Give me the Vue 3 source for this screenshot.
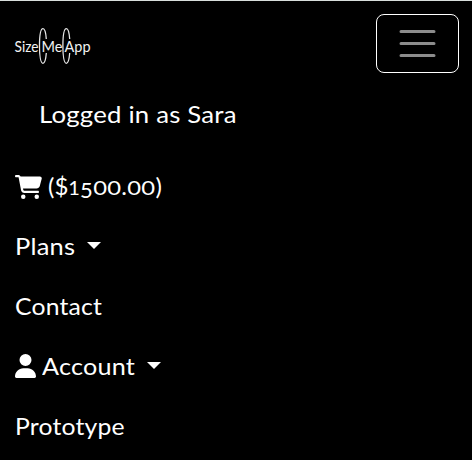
<script setup>
const links = [
  { label: 'Plans', cls: 'plans', caret: true },
  { label: 'Contact', cls: 'contact' },
  { label: 'Account', cls: 'account', caret: true, user: true },
  { label: 'Prototype', cls: 'prototype' },
]
</script>

<template>
  <nav class="navbar">
    <header class="top">
      <svg class="logo" width="80" height="40" viewBox="0 0 80 40" role="img" aria-label="SizeMeApp">
        <g fill="#f2f2f2">
          <text x="0.5" y="26" textLength="24" lengthAdjust="spacingAndGlyphs">Size</text>
          <text x="27.5" y="26" textLength="21" lengthAdjust="spacingAndGlyphs">Me</text>
          <text x="50.5" y="26" textLength="26" lengthAdjust="spacingAndGlyphs">App</text>
        </g>
        <g fill="none" stroke="#e6e6e6" stroke-width="1.3">
          <path d="M32.300 13C31.800 6.500 30.700 2.700 29 2.700C26.800 2.700 25.500 10 25.500 20S26.800 37.300 29 37.300C30.700 37.300 31.800 33.500 32.300 27" />
          <path d="M55.700 13C55.200 6.500 54.100 2.700 52.400 2.700C50.200 2.700 48.900 10 48.900 20S50.200 37.300 52.400 37.300C54.100 37.300 55.200 33.500 55.700 27" />
        </g>
      </svg>
      <button class="toggler" aria-label="Toggle navigation">
        <svg width="45" height="45" viewBox="0 0 30 30">
          <path d="M4 7h22M4 15h22M4 23h22" stroke="#8c8c8c" stroke-width="2" stroke-linecap="round" stroke-miterlimit="10" />
        </svg>
      </button>
    </header>
    <div class="login"><span class="label logged">Logged in as Sara</span></div>
    <a class="row cart">
      <svg class="cart-icon" width="27" height="24" viewBox="0 0 576 512" fill="#fff">
        <path d="M0 24C0 10.700 10.700 0 24 0H69.500c22 0 41.500 12.800 50.600 32h411c26.300 0 45.500 25 38.600 50.400l-41 152.300c-8.500 31.400-37 53.300-69.500 53.300H170.700l5.400 28.500c2.200 11.300 12.100 19.500 23.600 19.500H488c13.300 0 24 10.700 24 24s-10.700 24-24 24H199.700c-34.600 0-64.300-24.600-70.700-58.500L77.400 54.500c-.7-3.800-4-6.500-7.900-6.500H24C10.700 48 0 37.300 0 24zM128 464a48 48 0 1 1 96 0 48 48 0 1 1-96 0zm336-48a48 48 0 1 1 0 96 48 48 0 1 1 0-96z" />
      </svg>
      <span class="price">($<span class="one">1</span><span class="five">5</span><span class="zero">0</span><span class="zero">0</span>.<span class="zero">0</span><span class="zero">0</span>)</span>
    </a>
    <a v-for="link in links" :key="link.label" class="row">
      <svg v-if="link.user" class="user-icon" width="21" height="24" viewBox="0 0 448 512" fill="#fff">
        <path d="M224 256a128 128 0 1 0 0-256 128 128 0 1 0 0 256zm-45.700 48C79.800 304 0 383.800 0 482.300 0 498.700 13.300 512 29.700 512H418.300c16.400 0 29.700-13.300 29.700-29.700C448 383.800 368.200 304 269.700 304H178.300z" />
      </svg>
      <span class="label" :class="link.cls">{{ link.label }}</span>
      <span v-if="link.caret" class="caret"></span>
    </a>
  </nav>
</template>

<style>
body { margin: 0; background: #000; overflow: hidden; }
</style>

<style scoped>
.navbar {
  box-sizing: border-box;
  height: 460px;
  border-top: 1px solid #d8dedc;
  padding: 13px 13px 0 15px;
  background: #000;
  color: #fff;
  font: 24px/36px Lato, "Liberation Sans", sans-serif;
  overflow: hidden;
}
.top { display: flex; justify-content: space-between; align-items: flex-start; height: 59px; }
.logo { margin: 12px 0 0 -1px; font-family: Lato, sans-serif; font-size: 15.5px; }
.toggler {
  box-sizing: border-box;
  width: 83px;
  height: 59px;
  padding: 0;
  border: 1px solid #fff;
  border-radius: 8px;
  background: transparent;
  display: flex;
  align-items: center;
  justify-content: center;
}
.login { display: flex; align-items: flex-start; height: 84px; padding: 23px 0 0 24px; box-sizing: border-box; }
.row { display: flex; align-items: center; height: 60px; white-space: pre; }
.label { display: block; padding-bottom: 2px; transform-origin: left center; letter-spacing: 0.2px; }
.logged { transform: scaleX(1.072); }
.plans { transform: scaleX(1.062); }
.contact { transform: scaleX(1.03); }
.account { transform: scaleX(1.05); }
.prototype { transform: scaleX(1.03); }
.cart-icon { margin: -1px 6px 0 0; }
.user-icon { margin: -2px 6px 0 0; }
.price { display: flex; align-items: baseline; padding-bottom: 2px; }
.one, .zero { font-size: 20px; }
.zero { width: 14.3px; text-align: center; transform: scaleX(1.19); }
.one { width: 11.6px; text-align: center; }
.five { font-size: 22px; transform: translateY(3px); }
.caret { margin: -3px 0 0 15px; border: 7px solid transparent; border-top-color: #fff; border-bottom: 0; }
.account + .caret { margin-left: 16.5px; }
</style>
